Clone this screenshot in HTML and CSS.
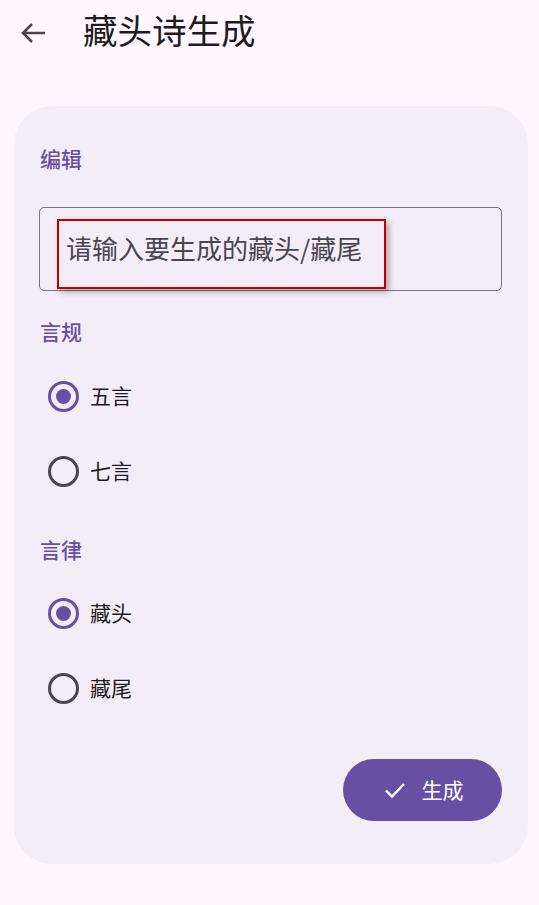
FILE: index.html
```html
<!DOCTYPE html>
<html lang="zh">
<head>
<meta charset="utf-8">
<title>藏头诗生成</title>
<link rel="stylesheet" href="styles.css">
</head>
<body>
<header class="topbar">
  <svg class="back" width="28" height="24" viewBox="0 0 28 24" aria-hidden="true">
    <path d="M26 12H4M13 3L4 12l9 9" fill="none" stroke="#49454F" stroke-width="2.6" stroke-linecap="butt" stroke-linejoin="miter"/>
  </svg>
  <h1 class="title">藏头诗生成</h1>
</header>
<main class="card">
  <div class="label">编辑</div>
  <div class="field">
    <div class="highlight"></div>
    <span class="placeholder">请输入要生成的藏头/藏尾</span>
  </div>
  <div class="label label-gap">言规</div>
  <div class="radio-row first">
    <span class="radio checked"></span><span class="radio-text">五言</span>
  </div>
  <div class="radio-row">
    <span class="radio"></span><span class="radio-text">七言</span>
  </div>
  <div class="label label-gap">言律</div>
  <div class="radio-row first second">
    <span class="radio checked"></span><span class="radio-text">藏头</span>
  </div>
  <div class="radio-row">
    <span class="radio"></span><span class="radio-text">藏尾</span>
  </div>
  <div class="actions">
    <button class="btn">
      <svg width="22" height="18" viewBox="0 0 22 18" aria-hidden="true">
        <path d="M2 9.5l6 6L20 3" fill="none" stroke="#ffffff" stroke-width="2.4"/>
      </svg>
      <span>生成</span>
    </button>
  </div>
</main>
</body>
</html>
```
FILE: styles.css
```css
* { box-sizing: border-box; }
html, body {
  margin: 0;
  padding: 0;
  background: #FEF7FF;
  font-family: "Noto Sans CJK SC", "Noto Sans", sans-serif;
  color: #1D1B20;
}
.topbar {
  height: 64px;
  display: flex;
  align-items: center;
  padding-left: 19px;
}
.back {
  display: block;
  margin-top: 2px;
}
.title {
  margin: -6px 0 0 36px;
  font-size: 34.5px;
  font-weight: 400;
  line-height: 40px;
  color: #1D1B20;
}
.card {
  margin: 42px 11px 0 14px;
  background: #F3EDF7;
  border-radius: 38px;
  padding: 37px 26px 43px 25px;
}
.label {
  font-size: 21px;
  line-height: 30px;
  font-weight: 500;
  color: #6750A4;
  padding-left: 1px;
}
.label-gap {
  margin-top: 25px;
}
.field {
  position: relative;
  margin-top: 34px;
  height: 84px;
  border: 1.5px solid #79747E;
  border-radius: 5px;
  display: flex;
  align-items: center;
  padding-left: 26px;
}
.placeholder {
  font-size: 26px;
  color: #49454F;
  line-height: 30px;
  margin-top: -3px;
}
.highlight {
  position: absolute;
  left: 17px;
  top: 11px;
  width: 329px;
  height: 70px;
  border: 2px solid #C00000;
  box-shadow: 3px 3px 6px rgba(0, 0, 0, 0.3);
  pointer-events: none;
}
.radio-row {
  height: 75px;
  display: flex;
  align-items: center;
  padding-left: 9px;
}
.radio-row.first {
  margin-top: 13px;
}
.radio-row.second {
  margin-top: 12px;
}
.radio {
  width: 31px;
  height: 31px;
  border-radius: 50%;
  border: 3px solid #49454F;
  display: flex;
  align-items: center;
  justify-content: center;
}
.radio.checked {
  border-color: #6750A4;
}
.radio.checked::after {
  content: "";
  width: 15px;
  height: 15px;
  border-radius: 50%;
  background: #6750A4;
}
.radio-text {
  margin-left: 11px;
  margin-top: -3px;
  font-size: 21px;
  line-height: 30px;
  color: #1D1B20;
}
.actions {
  margin-top: 33px;
  display: flex;
  justify-content: flex-end;
}
.btn {
  width: 159px;
  height: 62px;
  border: none;
  border-radius: 31px;
  background: #6750A4;
  color: #ffffff;
  font-family: inherit;
  font-size: 21px;
  display: flex;
  align-items: center;
  justify-content: center;
  gap: 16px;
  padding: 0 0 0 2px;
}
.btn svg {
  display: block;
}
.btn span {
  margin-top: -2px;
}
```
